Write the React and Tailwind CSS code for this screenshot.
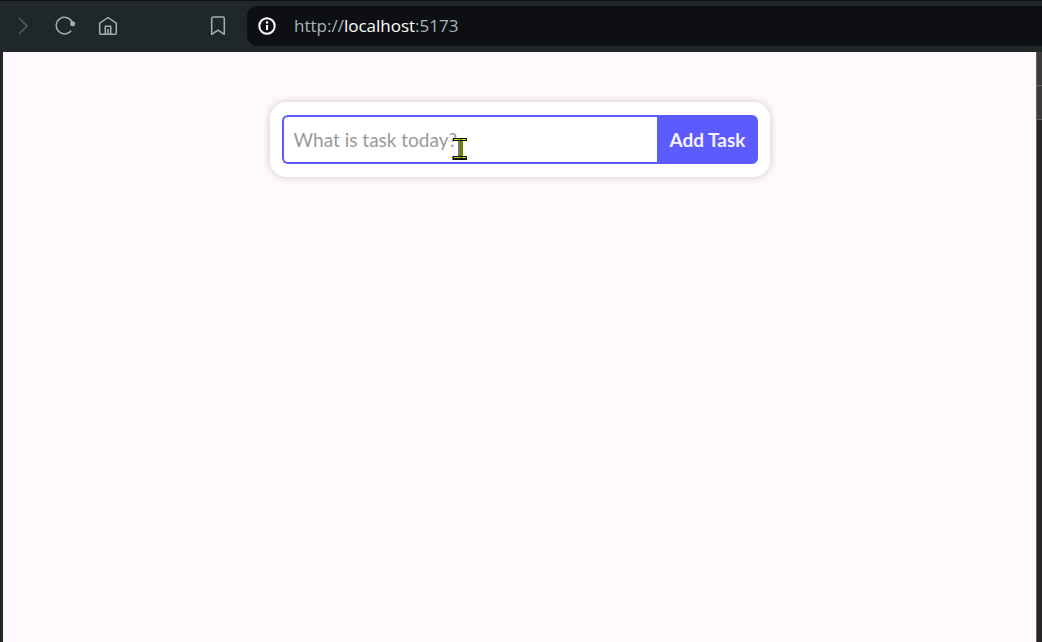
import React from "react";

const iconButton = "flex shrink-0 items-center justify-center";

function Toolbar() {
  return (
    <header className="flex h-[52px] items-center border-t border-[#0e1114] bg-[#1f2729] pt-1 pb-1.5 text-[#9fb0b9]">
      <nav aria-label="Browser" className="flex shrink-0 items-center">
        <button type="button" aria-label="Forward" className={`${iconButton} w-[46px] text-[#566064]`}>
          <svg width="20" height="20" viewBox="0 0 20 20" fill="none" stroke="currentColor" strokeWidth="1.5">
            <path d="M6 2l8 8-8 8" />
          </svg>
        </button>
        <button type="button" aria-label="Reload" className={`${iconButton} w-10`}>
          <svg width="22" height="20" viewBox="0 0 22 20" fill="none" stroke="currentColor" strokeWidth="1.5">
            <path d="M16.2 14.6A8.3 8.3 0 1 1 17.2 6.4" />
            <circle cx="17.6" cy="7.8" r="2.5" fill="currentColor" stroke="none" />
          </svg>
        </button>
        <button type="button" aria-label="Home" className={`${iconButton} w-11`}>
          <svg width="20" height="20" viewBox="0 0 20 20" fill="none" stroke="currentColor" strokeWidth="1.5" strokeLinejoin="round">
            <path d="M1.7 7.2L10 1.5l8.3 5.7V17a1.3 1.3 0 0 1-1.3 1.3H3A1.3 1.3 0 0 1 1.7 17z" />
            <path d="M7.3 18.2v-7.9h5.4v7.9M10 13v5.2" />
          </svg>
        </button>
      </nav>
      <button type="button" aria-label="Bookmark" className={`${iconButton} ml-[74px] w-7`}>
        <svg width="20" height="20" viewBox="0 0 20 20" fill="none" stroke="currentColor" strokeWidth="1.5" strokeLinejoin="round">
          <path d="M3.7 18.3V2.5A1.4 1.4 0 0 1 5.1 1.1h9.8a1.4 1.4 0 0 1 1.4 1.4v15.8L10 14.2z" />
        </svg>
      </button>
      <div className="ml-[15px] flex h-10 min-w-0 flex-1 items-center gap-[18px] rounded-l-[10px] bg-[#0d0f13] pl-[11px]">
        <svg className="shrink-0 text-white" width="18" height="18" viewBox="0 0 18 18" fill="none" stroke="currentColor" strokeWidth="2">
          <circle cx="9" cy="9" r="7.7" />
          <path d="M9 8v5" />
          <circle cx="9" cy="5.5" r="1.2" fill="currentColor" stroke="none" />
        </svg>
        <a href="http://localhost:5173" className="font-['Open_Sans','Noto_Sans',sans-serif] text-[17px] leading-6 text-[#aab6bd]">
          http://<span className="text-white">localhost</span>:5173
        </a>
      </div>
    </header>
  );
}

function TextCursor() {
  return (
    <svg className="pointer-events-none absolute top-[23px] left-[170px]" width="16" height="22" viewBox="0 0 16 22" shapeRendering="crispEdges" aria-hidden="true">
      <path d="M0 18h2v4H0zM6 3h2v15H6zM2 1h1v1H2z" fill="#777" />
      <path d="M1 0h14v3H1zM1 18h14v4H1z" fill="#111" />
      <path d="M8 3h3v15H8z" fill="#668500" />
      <path d="M2 1h12v1H2zM2 19h12v1H2z" fill="#b7ef00" />
      <path d="M8 1h2v1H8zM8 19h2v1H8z" fill="#668500" />
    </svg>
  );
}

function TaskForm() {
  return (
    <form
      onSubmit={(event) => event.preventDefault()}
      className="w-full max-w-[500px] rounded-2xl bg-white px-3 py-[13px] font-[Lato,sans-serif] text-[19px] leading-6 shadow-[0_0_8px_rgba(0,0,0,0.2)]"
    >
      <div className="relative flex h-[49px]">
        <input
          type="text"
          aria-label="Task"
          placeholder="What is task today?"
          className="min-w-0 flex-1 rounded-l-md border-2 border-r-0 border-[#5b5bff] bg-white px-2.5 text-[#333] outline-none placeholder:text-[#999]"
        />
        <button type="submit" className="shrink-0 rounded-r-md bg-[#5b5bff] px-3 font-bold text-[#f5f3ff]">
          Add Task
        </button>
        <TextCursor />
      </div>
    </form>
  );
}

export default function App() {
  return (
    <div className="flex min-h-screen flex-col bg-[#1f2729]">
      <Toolbar />
      <div className="flex flex-1 pl-[3px]">
        <main className="flex flex-1 items-start justify-center bg-[#fff9fd] px-4 pt-[50px]">
          <TaskForm />
        </main>
        <aside aria-label="Side panel" className="flex w-1.5 shrink-0 flex-col border-l border-[#626262] bg-[#242525]">
          <div className="h-[34px] border-b border-[#626262] bg-[#3b3b39]" />
          <div className="h-[34px] border-b border-[#626262] bg-[#3b3b39]" />
        </aside>
      </div>
    </div>
  );
}
